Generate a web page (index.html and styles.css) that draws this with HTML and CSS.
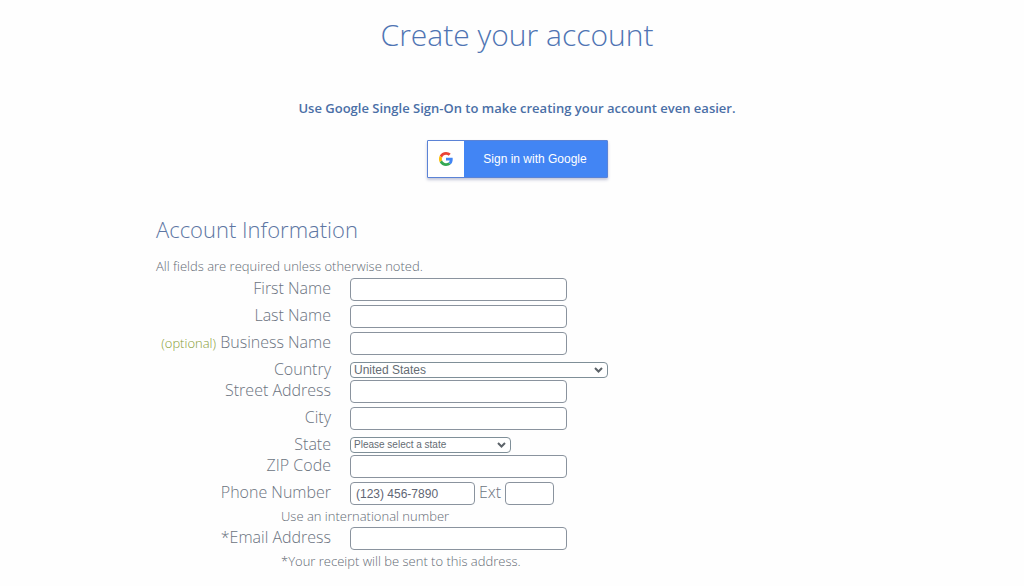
FILE: index.html
```html
<!DOCTYPE html>
<html lang="en">
<head>
    <meta charset="utf-8">
    <title>Create your account</title>
    <link rel="stylesheet" href="styles.css">
</head>
<body>
    <main class="page">
        <header class="intro">
            <h1>Create your account</h1>
            <p class="sso-text">Use Google Single Sign-On to make creating your account even easier.</p>
            <button type="button" class="google-btn">
                <span class="google-icon">
                    <svg width="14" height="14" viewBox="0 0 48 48" aria-hidden="true">
                        <path fill="#EA4335" d="M24 9.5c3.54 0 6.71 1.22 9.21 3.6l6.85-6.85C35.9 2.38 30.47 0 24 0 14.62 0 6.51 5.38 2.56 13.22l7.98 6.19C12.43 13.72 17.74 9.5 24 9.5z"/>
                        <path fill="#4285F4" d="M46.98 24.55c0-1.57-.15-3.09-.38-4.55H24v9.02h12.94c-.58 2.96-2.26 5.48-4.78 7.18l7.73 6c4.51-4.18 7.09-10.36 7.09-17.65z"/>
                        <path fill="#FBBC05" d="M10.53 28.59c-.48-1.45-.76-2.99-.76-4.59s.27-3.14.76-4.59l-7.98-6.19C.92 16.46 0 20.12 0 24s.92 7.54 2.56 10.78l7.97-6.19z"/>
                        <path fill="#34A853" d="M24 48c6.48 0 11.93-2.13 15.89-5.81l-7.73-6c-2.15 1.45-4.92 2.3-8.16 2.3-6.26 0-11.57-4.22-13.47-9.91l-7.98 6.19C6.51 42.62 14.62 48 24 48z"/>
                    </svg>
                </span>
                <span class="google-label">Sign in with Google</span>
            </button>
        </header>

        <form class="account-form">
            <h2>Account Information</h2>
            <p class="required-note">All fields are required unless otherwise noted.</p>

            <div class="row">
                <label for="firstName">First Name</label>
                <input type="text" id="firstName">
            </div>
            <div class="row">
                <label for="lastName">Last Name</label>
                <input type="text" id="lastName">
            </div>
            <div class="row">
                <label for="business"><span class="optional">(optional)</span> Business Name</label>
                <input type="text" id="business">
            </div>
            <div class="row row-select">
                <label for="country">Country</label>
                <div class="select country">
                    <select id="country">
                        <option>United States</option>
                    </select>
                    <svg class="arrow" width="9" height="6" viewBox="0 0 9 6" aria-hidden="true"><path d="M1 1l3.500 3.500 3.500-3.500"/></svg>
                </div>
            </div>
            <div class="row">
                <label for="street">Street Address</label>
                <input type="text" id="street">
            </div>
            <div class="row">
                <label for="city">City</label>
                <input type="text" id="city">
            </div>
            <div class="row row-select">
                <label for="state">State</label>
                <div class="select state">
                    <select id="state">
                        <option>Please select a state</option>
                    </select>
                    <svg class="arrow" width="9" height="6" viewBox="0 0 9 6" aria-hidden="true"><path d="M1 1l3.500 3.500 3.500-3.500"/></svg>
                </div>
            </div>
            <div class="row">
                <label for="zip">ZIP Code</label>
                <input type="text" id="zip">
            </div>
            <div class="row">
                <label for="phone">Phone Number</label>
                <div class="phone-group">
                    <input type="tel" id="phone" class="phone" placeholder="(123) 456-7890">
                    <label for="ext">Ext</label>
                    <input type="text" id="ext" class="ext">
                </div>
            </div>
            <p class="hint"><a href="#">Use an international number</a></p>
            <div class="row">
                <label for="email">*Email Address</label>
                <input type="email" id="email">
            </div>
            <p class="hint">*Your receipt will be sent to this address.</p>
        </form>
    </main>
</body>
</html>
```

FILE: styles.css
```css
* {
    box-sizing: border-box;
}
body {
    margin: 0;
    background: #fefefe;
    font-family: "Open Sans", Arial, sans-serif;
    font-weight: 300;
    color: #636a74;
}
.page {
    padding: 12px 146px 0 156px;
}
.intro {
    display: flex;
    flex-direction: column;
    align-items: center;
}
h1 {
    margin: 0;
    font-size: 30px;
    line-height: 46px;
    font-weight: 300;
    color: #4f74b3;
}
.sso-text {
    margin: 40px 0 22px;
    font-size: 13px;
    line-height: 20px;
    font-weight: 600;
    color: #4a6fa6;
}
.google-btn {
    display: flex;
    width: 181px;
    height: 38px;
    padding: 0;
    border: 1px solid #5b83d6;
    border-radius: 1px;
    background: #4285f4;
    box-shadow: 0 2px 3px rgba(60, 70, 130, 0.3);
    cursor: pointer;
}
.google-icon {
    display: flex;
    align-items: center;
    justify-content: center;
    width: 36px;
    height: 36px;
    background: #fff;
}
.google-label {
    flex: 1;
    font-family: "Liberation Sans", Arial, sans-serif;
    font-size: 12px;
    line-height: 36px;
    color: #fff;
}
h2 {
    margin: 35px 0 12px;
    font-size: 22px;
    line-height: 32px;
    font-weight: 300;
    color: #5d76a3;
}
.required-note {
    margin: 0 0 3px;
    font-size: 13px;
    line-height: 18px;
}
.row {
    display: grid;
    grid-template-columns: 175px 1fr;
    column-gap: 19px;
    height: 27px;
    align-items: start;
}
.row-select {
    height: 21px;
}
label {
    font-size: 16px;
    line-height: 20px;
    text-align: right;
    color: #6b737e;
}
.optional {
    font-size: 13px;
    line-height: 18px;
    color: #879c35;
}
input {
    width: 217px;
    height: 23px;
    padding: 0 5px;
    border: 1px solid #8a939e;
    border-radius: 4px;
    background: #fff;
    font-family: "Liberation Sans", Arial, sans-serif;
    font-size: 12px;
    color: #5f6674;
}
input::placeholder {
    color: #5f6674;
}
.select {
    position: relative;
    margin-top: 3px;
    height: 16px;
}
.select select {
    display: block;
    appearance: none;
    width: 100%;
    height: 16px;
    padding: 0 3px;
    border: 1px solid #7f8f98;
    border-radius: 4px;
    background: #fff;
    font-family: "Liberation Sans", Arial, sans-serif;
    font-size: 12px;
    line-height: 14px;
    color: #656c73;
}
.country {
    width: 258px;
}
.state {
    width: 161px;
}
.state select {
    font-size: 10px;
}
.arrow {
    position: absolute;
    right: 5px;
    top: 5px;
    fill: none;
    stroke: #5c6369;
    stroke-width: 2;
    pointer-events: none;
}
.phone-group {
    display: flex;
    gap: 4px;
}
.phone {
    width: 125px;
}
.ext {
    width: 49px;
}
.hint {
    margin: 0 0 4px 125px;
    font-size: 13px;
    line-height: 14px;
}
.hint a {
    color: inherit;
    text-decoration: none;
}
```
